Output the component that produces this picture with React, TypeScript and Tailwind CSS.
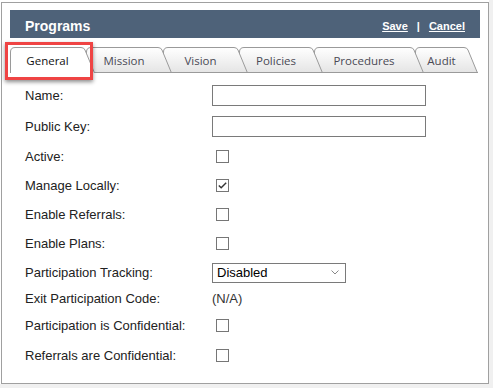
import React from 'react'

interface TabDef {
  id: string
  label: string
  width: number
  z: string
  active?: boolean
}

const TABS: TabDef[] = [
  { id: 'general', label: 'General', width: 85, z: 'z-[6]', active: true },
  { id: 'mission', label: 'Mission', width: 86, z: 'z-[5]' },
  { id: 'vision', label: 'Vision', width: 85, z: 'z-[4]' },
  { id: 'policies', label: 'Policies', width: 84, z: 'z-[3]' },
  { id: 'procedures', label: 'Procedures', width: 110, z: 'z-[2]' },
  { id: 'audit', label: 'Audit', width: 63, z: 'z-[1]' },
]

type Field =
  | { kind: 'text'; label: string; h: string }
  | { kind: 'check'; label: string; h: string; checked?: boolean }
  | { kind: 'select'; label: string; h: string; value: string }
  | { kind: 'static'; label: string; h: string; value: string }

const FIELDS: Field[] = [
  { kind: 'text', label: 'Name:', h: 'h-[31px]' },
  { kind: 'text', label: 'Public Key:', h: 'h-[31px]' },
  { kind: 'check', label: 'Active:', h: 'h-[29px]' },
  { kind: 'check', label: 'Manage Locally:', h: 'h-[29px]', checked: true },
  { kind: 'check', label: 'Enable Referrals:', h: 'h-[29px]' },
  { kind: 'check', label: 'Enable Plans:', h: 'h-[29px]' },
  { kind: 'select', label: 'Participation Tracking:', h: 'h-[29px]', value: 'Disabled' },
  { kind: 'static', label: 'Exit Participation Code:', h: 'h-[23px]', value: '(N/A)' },
  { kind: 'check', label: 'Participation is Confidential:', h: 'h-[31px]' },
  { kind: 'check', label: 'Referrals are Confidential:', h: 'h-[29px]' },
]

// slanted tab background, earlier tabs sit on top of later ones
function TabShape({ width, active }: { width: number; active?: boolean }) {
  const w = width
  const gid = active ? 'tabActive' : 'tabIdle'
  return (
    <svg className="absolute inset-0" width={w} height={26} viewBox={`0 0 ${w} 26`}>
      <defs>
        <linearGradient id={gid} x1="0" y1="0" x2="0" y2="1">
          <stop offset="0" stopColor="#ffffff" />
          <stop offset="1" stopColor={active ? '#ffffff' : '#e4e4e4'} />
        </linearGradient>
      </defs>
      <path
        d={`M0.5 26 L0.5 5 Q0.5 0.5 5 0.5 L${w - 14} 0.5 Q${w - 11} 0.5 ${w - 10} 3 L${w - 0.5} 26`}
        fill={`url(#${gid})`}
        stroke="#9a9a9a"
        strokeWidth="1"
      />
      {!active && <line x1="0" y1="25.5" x2={w} y2="25.5" stroke="#9a9a9a" strokeWidth="1" />}
    </svg>
  )
}

function Checkbox({ checked }: { checked?: boolean }) {
  return (
    <div className="ml-[4px] w-[13px] h-[13px] border border-[#767676] bg-white flex items-center justify-center">
      {checked && (
        <svg width="9" height="7" viewBox="0 0 9 7">
          <path d="M0.8 3.4 L3.2 5.8 L8.2 0.8" fill="none" stroke="#333" strokeWidth="1.4" />
        </svg>
      )}
    </div>
  )
}

export default function App() {
  return (
    <div className="w-[493px] h-[388px] bg-[#f0f0f0] font-['Liberation_Sans',Arial,sans-serif]">
      <div className="w-[489px] h-[384px] bg-white pt-[2px] pl-[1px]">
        <div className="relative w-[488px] h-[382px] border border-[#a0a0a0] bg-white pt-[7px] px-[8px]">
          {/* header bar */}
          <div className="h-[28px] bg-[#4e6279] flex items-center justify-between pl-[15px] pr-[15px] pt-[4px]">
            <span className="text-white font-bold text-[14px] leading-none">Programs</span>
            <div className="flex items-center text-white font-bold text-[11px] leading-none pt-[1px]">
              <span className="underline">Save</span>
              <span className="mx-[9px]">|</span>
              <span className="underline">Cancel</span>
            </div>
          </div>

          {/* tabs */}
          <div className="mt-[9px] flex h-[26px] font-['Open_Sans',sans-serif] text-[11.5px]">
            {TABS.map((tab, i) => (
              <div
                key={tab.id}
                className={`relative h-[26px] ${tab.z} ${i > 0 ? '-ml-[9px]' : ''}`}
                style={{ width: tab.width }}
              >
                <TabShape width={tab.width} active={tab.active} />
                <div
                  className={`relative h-full flex items-center justify-center pr-[10px] pt-[1px] ${
                    tab.active ? 'text-[#111]' : 'text-[#4a4a55]'
                  }`}
                >
                  {tab.label}
                </div>
              </div>
            ))}
          </div>

          {/* form */}
          <div className="mt-[7px] pl-[15px] text-[13px] text-[#222]">
            {FIELDS.map((f) => (
              <div key={f.label} className={`flex items-center ${f.h}`}>
                <div className="w-[187px] shrink-0">{f.label}</div>
                {f.kind === 'text' && (
                  <div className="w-[214px] h-[21px] border border-[#7a7a7a] bg-white" />
                )}
                {f.kind === 'check' && <Checkbox checked={f.checked} />}
                {f.kind === 'select' && (
                  <div className="w-[134px] h-[20px] border border-[#7a7a7a] bg-white flex items-center justify-between pl-[4px] pr-[6px]">
                    <span className="text-black">{f.value}</span>
                    <svg width="8" height="5" viewBox="0 0 8 5">
                      <path d="M0.5 0.5 L4 4 L7.5 0.5" fill="none" stroke="#888" strokeWidth="1" />
                    </svg>
                  </div>
                )}
                {f.kind === 'static' && <span className="text-[#333]">{f.value}</span>}
              </div>
            ))}
          </div>

          {/* highlight box around the active tab */}
          <div className="absolute left-[3px] top-[39px] w-[88px] h-[38px] border-[3px] border-[#ef4444] shadow-[0_2px_4px_rgba(0,0,0,0.45)] z-10" />
        </div>
      </div>
    </div>
  )
}
